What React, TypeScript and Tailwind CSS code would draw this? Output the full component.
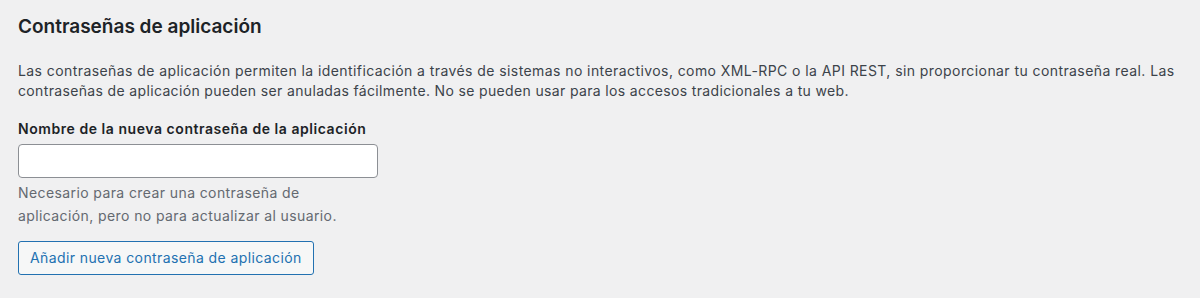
export default function App() {
  return (
    <div className="w-[1200px] h-[298px] bg-[#f0f0f1] pl-[18px] pt-[14px] text-[#3c434a]" style={{ fontFamily: 'Inter, "Noto Sans", sans-serif' }}>
      <h2 className="text-[19px] leading-[26px] font-semibold text-[#1d2327] m-0">Contraseñas de aplicación</h2>
      <p className="mt-[21px] text-[14px] leading-[20px] w-[1170px] tracking-[0.42px]">
        Las contraseñas de aplicación permiten la identificación a través de sistemas no interactivos, como XML-RPC o la API REST, sin proporcionar tu contraseña real. Las <span className="tracking-[0.35px]">contraseñas de aplicación pueden ser anuladas fácilmente. No se pueden usar para los accesos tradicionales a tu web.</span>
      </p>
      <label className="block mt-[18px] text-[14px] leading-[20px] font-semibold text-[#1d2327] tracking-[0.55px]">Nombre de la nueva contraseña de la aplicación</label>
      <input type="text" className="block mt-[5px] w-[360px] h-[34px] bg-white border border-[#8c8f94] rounded-[4px] outline-none" />
      <p className="mt-[3px] w-[330px] text-[14px] leading-[23px] text-[#646970] tracking-[0.4px]">
        Necesario para crear una contraseña de aplicación, pero no para actualizar al usuario.
      </p>
      <button className="mt-[14px] h-[34px] px-[11px] border border-[#2271b1] rounded-[3px] bg-[#f6f7f7] text-[#2271b1] text-[14px] leading-[20px] tracking-[0.4px]">
        Añadir nueva contraseña de aplicación
      </button>
    </div>
  );
}
